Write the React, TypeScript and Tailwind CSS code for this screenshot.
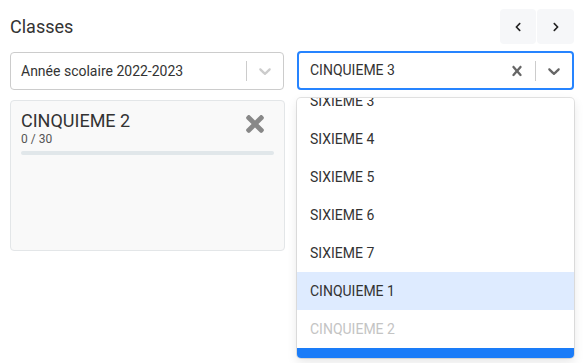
import { FaChevronLeft, FaChevronRight, FaTimes } from 'react-icons/fa'

const font = { fontFamily: 'Roboto, "Liberation Sans", Arial, sans-serif' }

function DownChevron({ className }: { className?: string }) {
  return (
    <svg viewBox="0 0 20 20" width="20" height="20" className={className} fill="currentColor">
      <path d="M4.516 7.548c0.436-0.446 1.043-0.481 1.576 0l3.908 3.747 3.908-3.747c0.533-0.481 1.141-0.446 1.574 0 0.436 0.445 0.408 1.197 0 1.615-0.406 0.418-4.695 4.502-4.695 4.502-0.217 0.223-0.502 0.335-0.787 0.335s-0.57-0.112-0.789-0.335c0 0-4.287-4.084-4.695-4.502s-0.436-1.17 0-1.615z" />
    </svg>
  )
}

function CrossIcon({ className }: { className?: string }) {
  return (
    <svg viewBox="0 0 20 20" width="20" height="20" className={className} fill="currentColor">
      <path d="M14.348 14.849c-0.469 0.469-1.229 0.469-1.697 0l-2.651-3.030-2.651 3.029c-0.469 0.469-1.229 0.469-1.697 0-0.469-0.469-0.469-1.229 0-1.697l2.758-3.15-2.759-3.152c-0.469-0.469-0.469-1.228 0-1.697s1.228-0.469 1.697 0l2.652 3.031 2.651-3.031c0.469-0.469 1.228-0.469 1.697 0s0.469 1.229 0 1.697l-2.758 3.152 2.758 3.15c0.469 0.469 0.469 1.229 0 1.698z" />
    </svg>
  )
}

const options = [
  { label: 'SIXIEME 3' },
  { label: 'SIXIEME 4' },
  { label: 'SIXIEME 5' },
  { label: 'SIXIEME 6' },
  { label: 'SIXIEME 7' },
  { label: 'CINQUIEME 1', focused: true },
  { label: 'CINQUIEME 2', disabled: true },
  { label: 'CINQUIEME 3', selected: true },
]

function ClassCard({ name, count }: { name: string; count: string }) {
  return (
    <div className="h-[151px] rounded border border-[#e3e6e8] bg-[#f9f9f9] px-[10px] pt-[9px]">
      <div className="flex items-start justify-between">
        <div>
          <div className="text-[18px] leading-[22px] text-[#333]">{name}</div>
          <div className="text-[12px] leading-[14px] text-[#555]">{count}</div>
        </div>
        <FaTimes className="mt-[1px] mr-[6px] text-[#888]" size={26} />
      </div>
      <div className="mt-[5px] h-[4px] rounded-full bg-[#e1e7ea]" />
    </div>
  )
}

export default function App() {
  return (
    <div className="h-[363px] w-[585px] overflow-hidden bg-white px-[10px] pt-[9px]" style={font}>
      <div className="mb-[7px] flex items-center justify-between">
        <h1 className="mt-[1px] text-[18px] leading-[22px] text-[#333]">Classes</h1>
        <div className="mr-[1px] flex gap-[1px]">
          <button className="flex h-[35px] w-[36px] items-center justify-center rounded bg-[#f6f7f9] text-[#222]">
            <FaChevronLeft size={10} />
          </button>
          <button className="flex h-[35px] w-[37px] items-center justify-center rounded bg-[#f6f7f9] text-[#222]">
            <FaChevronRight size={10} />
          </button>
        </div>
      </div>

      <div className="grid grid-cols-[275px_277px] gap-x-[12px]">
        <div className="mt-[1px] mr-[1px] flex h-[38px] items-center rounded border border-[#ccc] bg-white">
          <div className="flex-1 pl-[10px] text-[14px] text-[#333]">Année scolaire 2022-2023</div>
          <span className="h-[20px] w-px bg-[#ccc]" />
          <div className="px-[8px] text-[#ccc]">
            <DownChevron />
          </div>
        </div>

        <div className="relative">
          <div className="flex h-[39px] items-center rounded border-2 border-[#2684ff] bg-white">
            <div className="flex-1 pl-[11px] text-[14px] text-[#333]">CINQUIEME 3</div>
            <div className="px-[8px] text-[#666]">
              <CrossIcon />
            </div>
            <span className="h-[20px] w-px bg-[#ccc]" />
            <div className="px-[8px] text-[#666]">
              <DownChevron />
            </div>
          </div>

          <div className="absolute left-0 right-0 top-[47px] z-10 h-[260px] overflow-hidden rounded bg-white shadow-[0_0_0_1px_rgba(0,0,0,0.1),0_4px_11px_rgba(0,0,0,0.1)]">
            <div className="-mt-[16px]">
              {options.map((o) => (
                <div
                  key={o.label}
                  className={
                    'h-[38px] px-[13px] py-[8px] text-[14px] leading-[22px] ' +
                    (o.selected
                      ? 'bg-[#1a7cf8] text-white'
                      : o.focused
                        ? 'bg-[#deebff] text-[#333]'
                        : o.disabled
                          ? 'text-[#c4c4c4]'
                          : 'text-[#333]')
                  }
                >
                  {o.label}
                </div>
              ))}
            </div>
          </div>
        </div>

        <div className="mt-[10px]">
          <ClassCard name="CINQUIEME 2" count="0 / 30" />
        </div>
        <div className="mt-[9px]">
          <ClassCard name="CINQUIEME 3" count="0 / 30" />
        </div>
      </div>
    </div>
  )
}
